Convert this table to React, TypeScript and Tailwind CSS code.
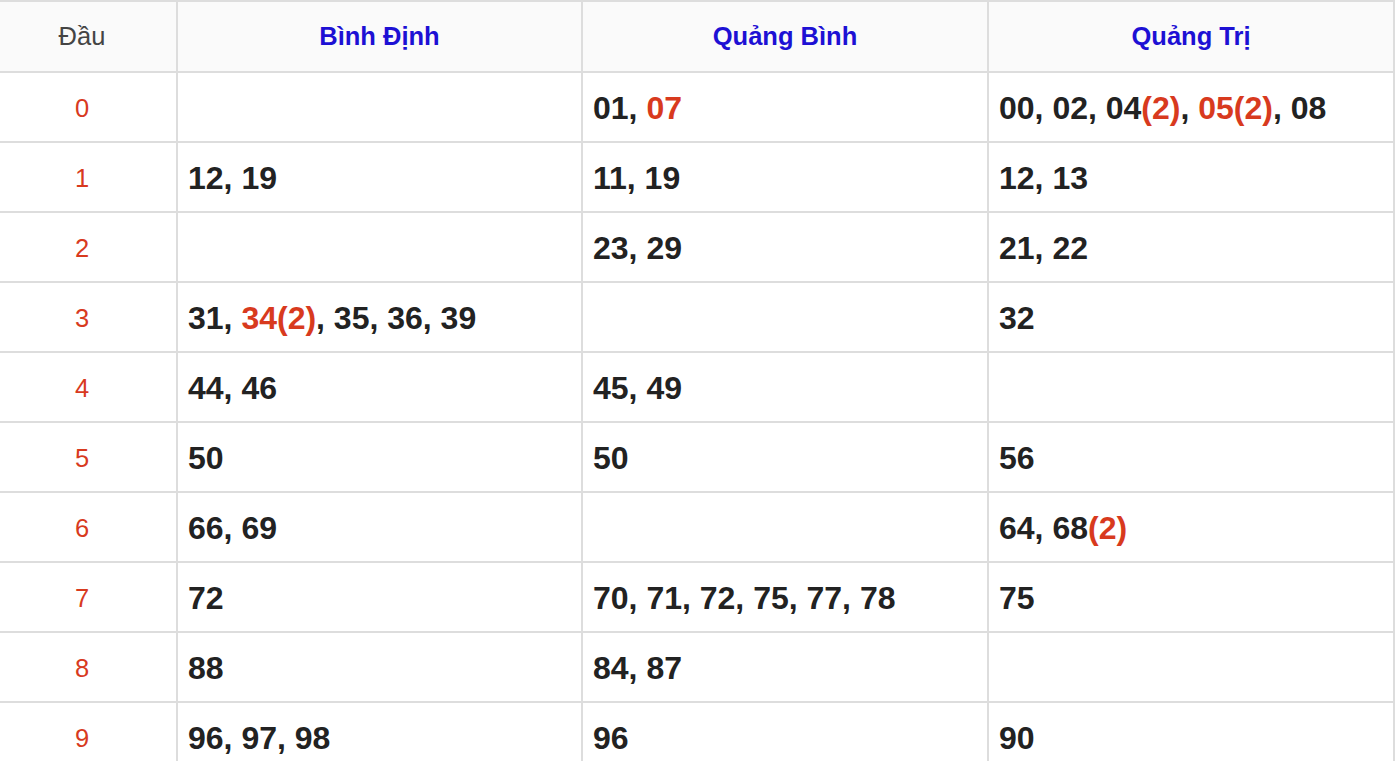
type Part = { t: string; red?: boolean };

const R = (t: string): Part => ({ t, red: true });
const B = (t: string): Part => ({ t });

const headers = ['Bình Định', 'Quảng Bình', 'Quảng Trị'];

// each row: [binhDinh, quangBinh, quangTri]
const rows: Part[][][] = [
  [[], [B('01, '), R('07')], [B('00, 02, 04'), R('(2)'), B(', '), R('05(2)'), B(', 08')]],
  [[B('12, 19')], [B('11, 19')], [B('12, 13')]],
  [[], [B('23, 29')], [B('21, 22')]],
  [[B('31, '), R('34(2)'), B(', 35, 36, 39')], [], [B('32')]],
  [[B('44, 46')], [B('45, 49')], []],
  [[B('50')], [B('50')], [B('56')]],
  [[B('66, 69')], [], [B('64, 68'), R('(2)')]],
  [[B('72')], [B('70, 71, 72, 75, 77, 78')], [B('75')]],
  [[B('88')], [B('84, 87')], []],
  [[B('96, 97, 98')], [B('96')], [B('90')]],
];

export default function App() {
  return (
    <div className="w-[1395px] h-[761px] overflow-hidden bg-white font-['Liberation_Sans',Arial,sans-serif]">
      {/* table is a bit wider on the left than the viewport */}
      <table className="table-fixed border-separate border-spacing-0 w-[1407px] ml-[-12px]">
        <colgroup>
          <col className="w-[190px]" />
          <col className="w-[405px]" />
          <col className="w-[406px]" />
          <col className="w-[406px]" />
        </colgroup>
        <thead>
          <tr className="bg-[#fafafa]">
            <th className="h-[73px] border-t-2 border-b-2 border-r-2 border-[#dddddd] text-center align-middle text-[25.5px] font-normal text-[#444444]">
              Đầu
            </th>
            {headers.map((h) => (
              <th
                key={h}
                className="h-[73px] border-t-2 border-b-2 border-r-2 border-[#dddddd] text-center align-middle text-[25.5px] font-bold text-[#1d10d4]"
              >
                {h}
              </th>
            ))}
          </tr>
        </thead>
        <tbody>
          {rows.map((row, r) => (
            <tr key={r}>
              <td className="h-[70px] border-b-2 border-r-2 border-[#dddddd] text-center align-middle text-[25.5px] text-[#d83a1e] pt-[2px]">
                {r}
              </td>
              {row.map((cell, c) => (
                <td
                  key={c}
                  className="h-[70px] border-b-2 border-r-2 border-[#dddddd] pl-[10px] pt-[2px] align-middle text-[32px] font-bold text-[#222222] whitespace-nowrap"
                >
                  {cell.map((p, k) => (
                    <span key={k} className={p.red ? 'text-[#d83a1e]' : ''}>
                      {p.t}
                    </span>
                  ))}
                </td>
              ))}
            </tr>
          ))}
        </tbody>
      </table>
    </div>
  );
}
